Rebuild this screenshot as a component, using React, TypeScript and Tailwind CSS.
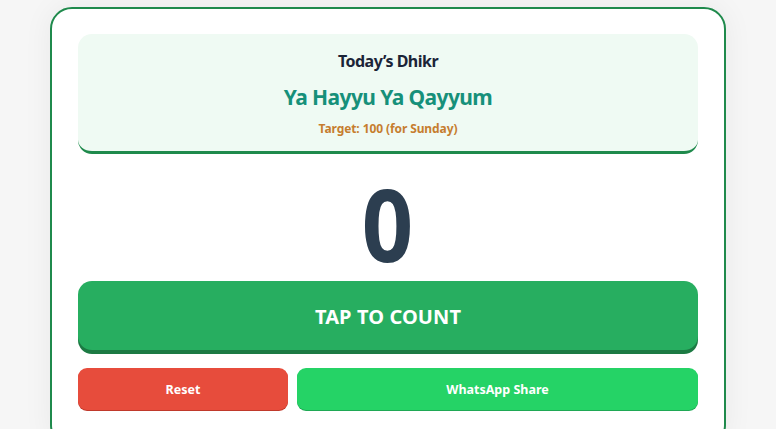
import React from "react";

export default function App() {
  return (
    <div
      className="w-[776px] h-[429px] overflow-hidden bg-[#f6f6f6] flex justify-center"
      style={{ fontFamily: '"Noto Sans", "Open Sans", sans-serif' }}
    >
      <div className="mt-[7px] w-[676px] h-[440px] bg-white border-2 border-[#1f8a4c] rounded-[22px] shadow-[0_0_30px_rgba(0,0,0,0.06)] px-[26px] pt-[25px] flex flex-col">
        <div className="bg-[#effaf3] rounded-[14px] border-b-[3px] border-[#1f8a4c] pt-[15px] pb-[13px] flex flex-col items-center">
          <div className="text-[16px] leading-[24px] font-bold tracking-[-0.5px] text-[#1b2437]">Today’s Dhikr</div>
          <div className="mt-[9px] text-[21px] leading-[30px] font-bold tracking-[-0.6px] text-[#16907a]">Ya Hayyu Ya Qayyum</div>
          <div className="mt-[8px] text-[12px] leading-[18px] font-bold tracking-[-0.1px] text-[#c67d2e]">Target: 100 (for Sunday)</div>
        </div>
        <div className="mt-[19px] text-center text-[100px] leading-[100px] font-bold text-[#2c3e50]">
          <span className="inline-block scale-x-[0.9]">0</span>
        </div>
        <button className="mt-[8px] h-[69px] w-full pt-[2px] rounded-[14px] bg-[#27ae60] shadow-[0_4px_0_#1c7a43] text-white text-[20px] font-bold tracking-[0.1px]">
          TAP TO COUNT
        </button>
        <div className="mt-[18px] flex gap-[9px]">
          <button className="w-[210px] h-[42px] pt-[2px] rounded-[9px] bg-[#e74c3c] shadow-[0_1px_0_#c0392b] text-white text-[12.5px] font-bold">
            Reset
          </button>
          <button className="flex-1 h-[42px] pt-[2px] rounded-[9px] bg-[#25d366] shadow-[0_1px_0_#1fa855] text-white text-[12.5px] font-bold">
            WhatsApp Share
          </button>
        </div>
      </div>
    </div>
  );
}
